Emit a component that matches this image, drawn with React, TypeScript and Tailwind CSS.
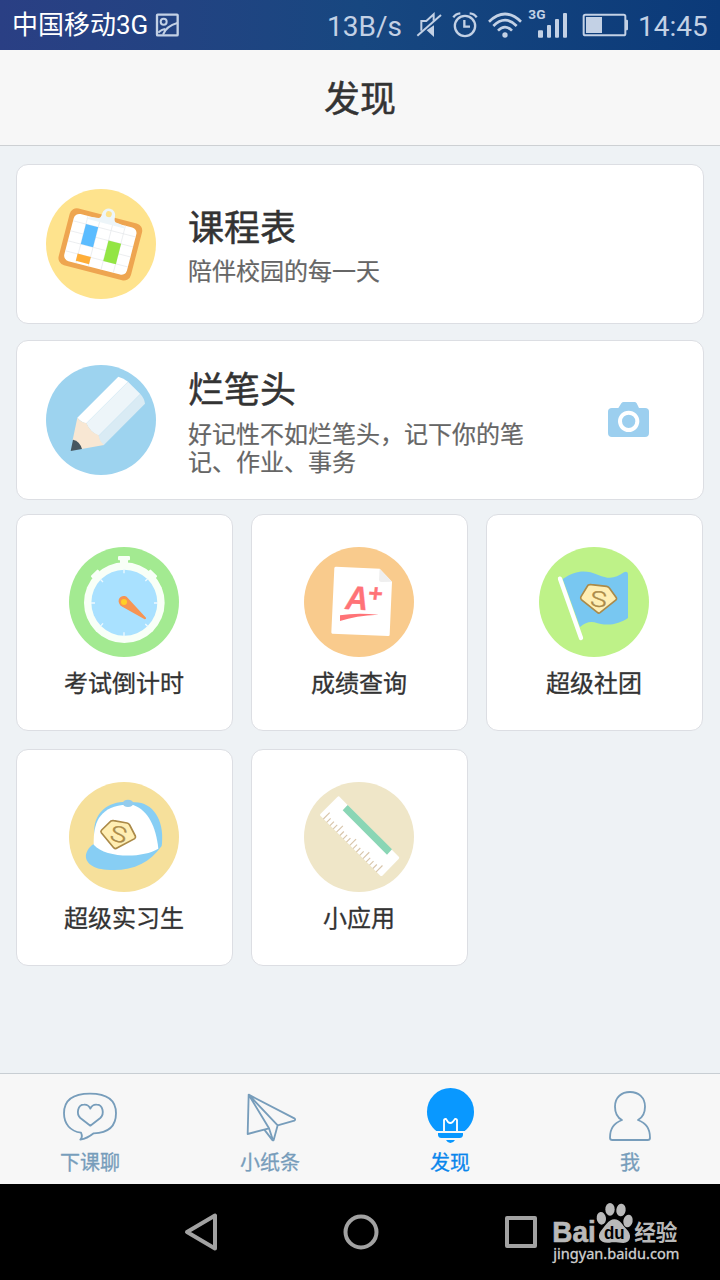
import type { ReactNode } from "react";

const cjk = "font-['Noto_Sans_CJK_SC',sans-serif]";

function StatusBar() {
  return (
    <header className="flex h-[50px] items-center bg-linear-to-r from-[#2a3f84] via-[#174780] to-[#0b3a79] text-[#c3d1e5]">
      <span className="w-[143px] pl-[12px] text-[26px] leading-[30px] whitespace-nowrap text-white font-[Roboto,'Noto_Sans_CJK_SC',sans-serif]">
        中国移动3G
      </span>
      <svg className="ml-[10px] h-[50px] w-[30px]" viewBox="459 0 90 150" fill="none" stroke="#c3d1e5" strokeWidth="7">
        <rect x="471" y="44" width="62" height="62" rx="2" />
        <circle cx="491" cy="65" r="9" strokeWidth="6" />
        <path d="M475 98 Q484 88 496 87 M489 104 Q499 78 532 69" strokeWidth="6" />
      </svg>
      <span className="ml-[144px] w-[88px] text-[28px] leading-[50px] font-[Roboto,sans-serif] pt-[3px] whitespace-nowrap">13B/s</span>
      <svg className="h-[50px] w-[28px]" viewBox="165 0 84 150" fill="none" stroke="#c3d1e5" strokeWidth="6">
        <path d="M172 107 L243 45" />
        <path d="M184 92 V63 H199 L221 43 V62" />
        <path d="M200 91 L222 76 V111 Z" fill="#c3d1e5" stroke="none" />
      </svg>
      <svg className="ml-[8px] h-[50px] w-[28px]" viewBox="273 0 84 150" fill="none" stroke="#c3d1e5" strokeWidth="7">
        <circle cx="315" cy="78" r="30.5" />
        <path d="M313 60 V80 H330" />
        <path d="M280 52 Q287 41 301 40 M329 40 Q343 41 350 52" />
      </svg>
      <svg className="ml-[7px] h-[50px] w-[38px]" viewBox="378 0 114 150" fill="none" stroke="#c3d1e5" strokeWidth="8">
        <path d="M387 65 Q435 19 483 65 M400 78 Q435 43 470 78 M414 92 Q435 71 456 92" />
        <circle cx="435" cy="105" r="8" fill="#c3d1e5" stroke="none" />
      </svg>
      <svg className="ml-[3px] h-[50px] w-[44px]" viewBox="501 0 132 150" fill="#c3d1e5">
        <text x="505" y="57" fontFamily="Roboto, sans-serif" fontWeight="700" fontSize="41" textLength="52">3G</text>
        <rect x="534" y="91" width="15" height="22" rx="3" />
        <rect x="561" y="75" width="12" height="38" rx="3" />
        <rect x="585" y="57" width="12" height="56" rx="3" />
        <rect x="609" y="39" width="12" height="74" rx="3" />
      </svg>
      <svg className="ml-[10px] h-[50px] w-[50px]" viewBox="663 0 150 150" fill="#c3d1e5">
        <rect x="671" y="44" width="125" height="62" rx="5" fill="none" stroke="#c3d1e5" strokeWidth="6" />
        <rect x="678" y="51" width="48" height="48" />
        <path d="M798 59 H801 Q804 59 804 63 V87 Q804 91 801 91 H798 Z" />
      </svg>
      <span className="ml-[7px] text-[28px] leading-[50px] pt-[3px] font-[Roboto,sans-serif]">14:45</span>
    </header>
  );
}

const iconSize = "block h-[110px] w-[110px] shrink-0";

function TimetableIcon() {
  return (
    <svg className={iconSize} viewBox="48 57 330 330">
      <circle cx="213" cy="222" r="165" fill="#fee38d" />
      <g transform="rotate(14.5 211 223)">
        <rect x="99" y="135" width="224" height="176" rx="22" fill="#eea550" />
        <rect x="114" y="150" width="194" height="146" rx="17" fill="#fff" />
        <path d="M114 175 H308 M114 206 H308 M114 237 H308 M114 268 H308 M154 150 V296 M192 150 V296 M232 150 V296 M270 150 V296" stroke="#e5e7ea" strokeWidth="2" />
        <rect x="154" y="175" width="38" height="62" fill="#5bbcff" />
        <rect x="232" y="206" width="39" height="63" fill="#93e544" />
        <rect x="152" y="267" width="41" height="22" fill="#ffae38" />
        <path d="M150 159 Q162 148 186 148 Q193 146 193 132 A20 20 0 0 1 233 132 Q233 146 240 148 Q264 149 272 159 Z" fill="#edf5f9" />
        <circle cx="213" cy="129" r="9" fill="#fee38d" />
      </g>
    </svg>
  );
}

function PencilIcon() {
  return (
    <svg className={iconSize} viewBox="48 45 330 330">
      <circle cx="213" cy="210" r="165" fill="#9dd3ef" />
      <path d="M142 203 L265 80 Q281 84 294 95 L169 220 Q154 217 142 203 Z" fill="#fff" />
      <path d="M169 220 L294 95 L331 132 L206 257 Q180 247 169 220 Z" fill="#edf5f9" />
      <path d="M206 257 L331 132 Q343 145 345 161 L221 286 Q207 275 206 257 Z" fill="#d9ebf4" />
      <path d="M142 203 Q151 216 169 219 Q180 246 206 256 Q208 274 222 285 L155 297 L128 270 Z" fill="#f8e7d3" />
      <path d="M129 269 Q149 273 156 297 L122 303 Z" fill="#475760" />
    </svg>
  );
}

function StopwatchIcon() {
  return (
    <svg className={iconSize} viewBox="57 51 330 330">
      <circle cx="222" cy="216" r="165" fill="#a3ea91" />
      <g fill="#f8fff7">
        <path d="M207 78 H237 Q240 78 240 82 V88 Q240 91 237 91 H234 V101 H210 V91 H207 Q204 91 204 88 V82 Q204 78 207 78 Z" />
        <g transform="rotate(-45 222 218)"><rect x="207" y="91" width="30" height="10" rx="3" /><rect x="211" y="96" width="22" height="13" /></g>
        <g transform="rotate(45 222 218)"><rect x="207" y="91" width="30" height="10" rx="3" /><rect x="211" y="96" width="22" height="13" /></g>
        <circle cx="223" cy="218" r="121" />
      </g>
      <circle cx="223" cy="218" r="99" fill="#a9e1ff" />
      <path d="M222 118 V130 M222 307 V319 M123 219 H135 M312 219 H324 M151 148 L159 156 M286 282 L294 290 M293 146 L286 153 M151 289 L159 280" stroke="#eef9ff" strokeWidth="4" />
      <path d="M208 221 A15 15 0 0 1 234 205 L288 263 Q289 268 284 268 L217 230 Q210 227 208 221 Z" fill="#f79452" />
      <circle cx="222" cy="216" r="9" fill="#ffcf26" />
    </svg>
  );
}

function GradeIcon() {
  return (
    <svg className={iconSize} viewBox="57 51 330 330">
      <circle cx="222" cy="216" r="165" fill="#f9cb8d" />
      <path d="M153 110 L284 116 L321 155 L314 314 Q314 318 310 318 L142 311 Q139 311 139 307 L148 114 Q149 110 153 110 Z" fill="#fff" />
      <path d="M284 116 L321 155 L289 156 Q282 156 282 149 Z" fill="#efefef" />
      <g fill="#ff7377" stroke="#ff7377" fontFamily="Liberation Sans, Arial, sans-serif" fontWeight="700" fontStyle="italic">
        <text transform="translate(180 237) rotate(3)" fontSize="100" textLength="68" lengthAdjust="spacingAndGlyphs" strokeWidth="1">A</text>
        <text transform="translate(246 214) rotate(3) skewX(-4)" fontSize="74" strokeWidth="1">+</text>
      </g>
      <path d="M165 256 Q212 247 281 254 Q211 257 165 273 Z" fill="#ff7377" />
    </svg>
  );
}

function FlagIcon() {
  return (
    <svg className={iconSize} viewBox="57 51 330 330">
      <circle cx="222" cy="216" r="165" fill="#bef288" />
      <path d="M128 147 C170 121 195 119 235 135 C268 149 287 145 312 127 Q324 122 324 135 V264 C297 282 263 291 223 277 Q202 272 180 291 Z" fill="#78c7f1" />
      <path d="M120 146 L183 324" stroke="#fff" strokeWidth="13" strokeLinecap="round" />
      <path d="M205 165 Q209 163 214 164 L260 169 Q265 170 268 174 L289 203 Q291 207 288 210 L240 248 Q236 251 232 247 L184 209 Q180 205 183 200 L202 169 Z" fill="#ffeeb3" stroke="#ab8a48" strokeWidth="5" />
      <text transform="translate(209 228) rotate(5) scale(1.28 1)" fontFamily="Roboto, sans-serif" fontWeight="300" fontSize="65" fill="#ab8a48" stroke="#ab8a48" strokeWidth="1.2">S</text>
    </svg>
  );
}

function CapIcon() {
  return (
    <svg className={iconSize} viewBox="57 36 330 330">
      <circle cx="222" cy="201" r="165" fill="#f6e09b" />
      <path d="M133 178 C136 122 181 88 252 97 C307 95 343 149 336 220 L335 228 C297 282 240 306 169 299 C127 298 99 274 110 247 Q116 231 132 221 Z" fill="#87cef4" />
      <path d="M131 224 C130 160 146 115 217 105 L250 105 C294 121 318 170 325 236 C275 266 166 264 131 224 Z" fill="#fff" />
      <ellipse cx="234" cy="100" rx="16" ry="11" fill="#94cced" />
      <path d="M183 153 Q187 151 191 152 L231 159 Q236 160 239 165 L256 198 Q258 202 254 206 L201 234 Q196 238 191 233 L154 188 Q151 184 155 180 Z" fill="#ffeeb3" stroke="#ab8a48" strokeWidth="5" />
      <text transform="translate(177 210) rotate(12) scale(1.28 1)" fontFamily="Roboto, sans-serif" fontWeight="300" fontSize="65" fill="#ab8a48" stroke="#ab8a48" strokeWidth="1.2">S</text>
    </svg>
  );
}

function RulerIcon() {
  const marks = Array.from({ length: 17 }, (_, i) => i);
  return (
    <svg className={iconSize} viewBox="57 36 330 330">
      <circle cx="222" cy="201" r="165" fill="#efe6c8" />
      <path d="M162 79 L342 261 Q344 264 341 267 L292 317 Q289 319 286 317 L106 137 Q104 135 106 132 L157 81 Q160 78 162 79 Z" fill="#fff" />
      <path d="M188 105 L321 238 L306 254 L173 121 Z" fill="#8ad6b5" />
      {marks.map((i) => {
        const x = 115 + i * 9.9;
        const y = 147 + i * 9.9;
        const l = i % 4 === 0 ? 19 : 12;
        return <path key={i} d={`M${x} ${y} L${x + l} ${y - l}`} stroke="#d8c5aa" strokeWidth="3.5" />;
      })}
    </svg>
  );
}

function FeatureCard({ icon, children, action }: { icon: ReactNode; children: ReactNode; action?: ReactNode }) {
  return (
    <section className="flex h-[160px] items-center rounded-[12px] border border-[#dcdee3] bg-white pl-[29px]">
      {icon}
      <div className="ml-[32px] w-[337px] self-start">{children}</div>
      {action}
    </section>
  );
}

const headingText = "text-[36px] leading-[36px] text-[#333] [-webkit-text-stroke:0.5px_#333]";
const bodyText = "text-[24px] leading-[28px] text-[#666] [-webkit-text-stroke:0.2px_#666]";

function Tile({ icon, label }: { icon: ReactNode; label: string }) {
  return (
    <section className="flex h-[217px] flex-col items-center rounded-[12px] border border-[#dcdee3] bg-white pt-[32px] pr-px">
      {icon}
      <span className="mt-[11px] text-[24px] leading-[28px] text-[#333] [-webkit-text-stroke:0.3px_#333]">{label}</span>
    </section>
  );
}

function Tab({ label, active, viewBox, children }: { label: string; active?: boolean; viewBox: string; children: ReactNode }) {
  return (
    <div className={`flex flex-col items-center pt-[13px] ${active ? "text-[#0a86ec]" : "text-[#779dbb]"}`}>
      <svg className="h-[60px] w-[60px]" viewBox={viewBox} fill="none" stroke="#779dbb" strokeWidth="5.5" strokeLinejoin="round">
        {children}
      </svg>
      <span className="mt-[3px] text-[20px] leading-[24px] [-webkit-text-stroke:0.3px]">{label}</span>
    </div>
  );
}

function Watermark() {
  return (
    <svg className="ml-[9px] h-[68px] w-[140px]" viewBox="570 384 420 204" fill="#b9b9b9">
      <g fontFamily="Liberation Sans, Arial, sans-serif">
        <text x="577" y="515" fontSize="86" fontWeight="700" textLength="130" lengthAdjust="spacingAndGlyphs" stroke="#b9b9b9" strokeWidth="2">Bai</text>
        <ellipse cx="724" cy="445" rx="14" ry="19" transform="rotate(-8 724 445)" />
        <ellipse cx="750" cy="418" rx="14" ry="19" />
        <ellipse cx="783" cy="420" rx="14" ry="19" transform="rotate(8 783 420)" />
        <ellipse cx="804" cy="453" rx="14" ry="19" transform="rotate(12 804 453)" />
        <path d="M763 448 C781 448 786 465 799 477 C817 493 813 519 790 519 C775 519 765 515 749 518 C721 522 709 502 722 484 C735 469 745 448 763 448 Z" />
        <text x="732" y="507" fontSize="53" fontWeight="700" textLength="62" lengthAdjust="spacingAndGlyphs" fill="#000">du</text>
      </g>
      <text x="823" y="509" fontFamily="Noto Sans CJK SC, sans-serif" fontSize="65" fontWeight="700" textLength="129">经验</text>
      <text x="580" y="568" fontFamily="Noto Sans, sans-serif" fontSize="44" textLength="378" lengthAdjust="spacingAndGlyphs" fill="#d0d0d0" stroke="#d0d0d0" strokeWidth="1">jingyan.baidu.com</text>
    </svg>
  );
}

export default function App() {
  return (
    <div className={`flex h-[1280px] w-[720px] flex-col overflow-hidden bg-[#eef2f5] ${cjk}`}>
      <StatusBar />
      <div className="flex h-[96px] items-center justify-center border-b border-[#cdd0d3] bg-[#f7f7f7] pb-[3px]">
        <h1 className={headingText}>发现</h1>
      </div>

      <main className="flex-1 pt-[18px] pl-[16px]">
        <div className="flex w-[688px] flex-col gap-[16px]">
          <FeatureCard icon={<TimetableIcon />}>
            <h2 className={`mt-[42px] ${headingText}`}>课程表</h2>
            <p className={`mt-[13px] ${bodyText}`}>陪伴校园的每一天</p>
          </FeatureCard>
          <FeatureCard
            icon={<PencilIcon />}
            action={
              <svg className="mb-px ml-[83px] h-[35px] w-[41px]" viewBox="324 126 123 105">
                <path d="M355 144 L364 130 Q367 126 371 126 H403 Q408 126 410 130 L417 144 H435 Q447 144 447 155 V219 Q447 231 435 231 H336 Q324 231 324 219 V155 Q324 144 336 144 Z" fill="#9ccfef" />
                <circle cx="386" cy="184" r="26" fill="none" stroke="#fff" strokeWidth="12" />
              </svg>
            }
          >
            <h2 className={`mt-[28px] ${headingText}`}>烂笔头</h2>
            <p className={`mt-[14px] ${bodyText}`}>好记性不如烂笔头，记下你的笔记、作业、事务</p>
          </FeatureCard>
        </div>
        <div className="mt-[14px] grid w-[687px] grid-cols-3 gap-[18px]">
          <Tile icon={<StopwatchIcon />} label="考试倒计时" />
          <Tile icon={<GradeIcon />} label="成绩查询" />
          <Tile icon={<FlagIcon />} label="超级社团" />
          <Tile icon={<CapIcon />} label="超级实习生" />
          <Tile icon={<RulerIcon />} label="小应用" />
        </div>
      </main>

      <nav className="grid h-[111px] grid-cols-4 border-t border-[#c8ced3] bg-[#f7f7f7]">
        <Tab label="下课聊" viewBox="180 52 180 180">
          <path d="M241 210 Q249 202 243 189 C211 185 192 163 192 131 C192 91 220 72 270 72 C321 72 348 92 348 131 C348 171 324 190 281 191 Q261 207 241 210 Z" />
          <path d="M271 168 L241 145 C228 132 233 105 252 105 Q265 104 271 117 Q277 104 290 105 C309 105 314 132 301 145 Z" />
        </Tab>
        <Tab label="小纸条" viewBox="721 51 180 180">
          <path d="M747 74 L884 145 Q889 149 884 152 L834 166 L822 210 Q820 213 817 209 L794 179 M747 74 L744 192 L808 175 L747 74 L834 166 M808 175 L820 211" />
        </Tab>
        <Tab label="发现" active viewBox="180 51 180 180">
          <path d="M229 183 C212 169 201 149 201 125 A70.5 71 0 0 1 342 125 C342 149 331 169 314 183 Z" fill="#0998ff" stroke="none" />
          <path d="M252 183 V150 Q253 146 258 147 L264 156 Q271 162 278 156 L285 147 Q290 146 291 150 V183" stroke="#fff" />
          <path d="M234 189 H309 V195 Q308 204 299 204 H244 Q235 204 234 195 Z M258 210 H285 Q280 219 271 219 Q263 219 258 210 Z" fill="#0998ff" stroke="none" />
        </Tab>
        <Tab label="我" viewBox="720 51 180 180">
          <path d="M786 150 C771 142 765 127 765 110 C765 81 785 66 810 66 C836 66 855 83 855 110 C855 127 848 142 834 150 C858 160 870 174 870 204 Q870 210 863 210 H757 Q750 210 750 203 C750 174 762 160 786 150 Z" />
        </Tab>
      </nav>

      <footer className="flex h-[96px] items-center bg-black pl-[181px]">
        <svg className="h-[40px] w-[360px]" viewBox="181 1212 360 40" fill="none" stroke="#a2a2a2" strokeWidth="4" strokeLinejoin="round">
          <path d="M187 1232 L215 1215.5 V1248.5 Z" />
          <circle cx="361" cy="1232" r="15.5" />
          <rect x="507" y="1218" width="28" height="28" />
        </svg>
        <Watermark />
      </footer>
    </div>
  );
}
